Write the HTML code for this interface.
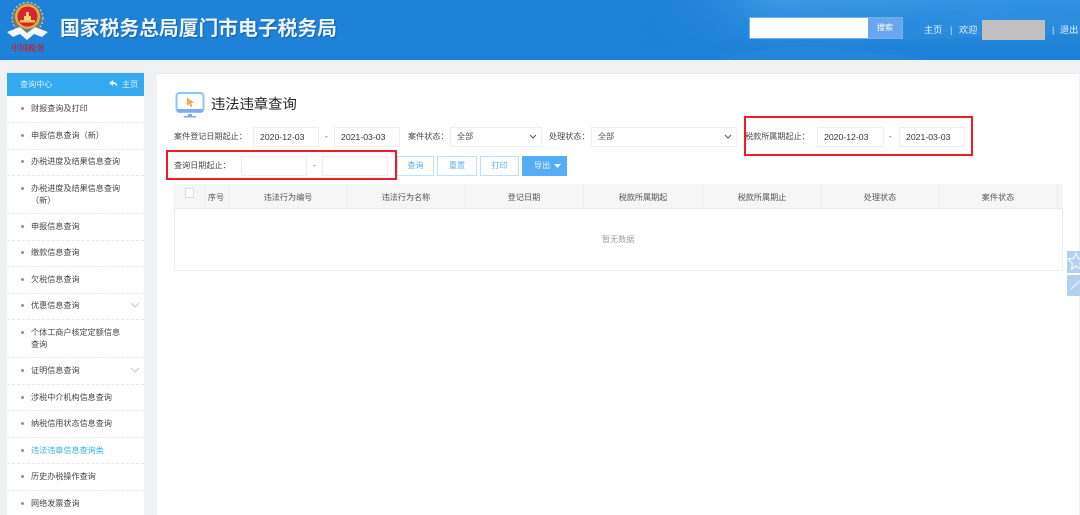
<!DOCTYPE html>
<html lang="zh-CN">
<head>
<meta charset="utf-8">
<title>违法违章查询</title>
<style>
html,body{margin:0;padding:0;width:1080px;height:515px;overflow:hidden;background:#f0f1f3}
body{font-family:"Liberation Sans","Noto Sans CJK SC",sans-serif;font-size:8.1px;color:#484848}
#w{position:relative;width:1080px;height:515px;overflow:hidden;filter:blur(.3px)}
.a{position:absolute;box-sizing:border-box}
.p{font-family:"Noto Sans CJK TC",sans-serif}
.t{position:absolute;white-space:nowrap;line-height:14px;height:14px}
.i{position:absolute;box-sizing:border-box;background:#fff;border:1px solid #eeeeee;height:20px;top:127px;line-height:18px;font-size:8.7px;color:#333;padding-left:6px;white-space:nowrap}
.s{position:absolute;box-sizing:border-box;background:#fff;border:1px solid #eeeeee;height:20px;top:127px;line-height:18px;color:#555;padding-left:6px}
.s svg{position:absolute;right:4px;top:6px}
.b{position:absolute;box-sizing:border-box;top:156px;height:20px;border:1px solid #bfe0f9;background:#fff;color:#5db0ee;text-align:center;line-height:18px}
.d{position:absolute;left:7px;width:137px;height:0;border-top:1px dashed #e8e8e8}
.m{position:absolute;left:31px;white-space:nowrap;line-height:12px;color:#454545}
.dot{position:absolute;left:21px;width:3px;height:3px;border-radius:50%;background:#8a98a4}
.h{position:absolute;top:191px;line-height:14px;white-space:nowrap;color:#555;transform:translateX(-50%)}
.v{position:absolute;top:184px;height:24px;width:1px;background:#ececec}
</style>
</head>
<body>
<div id="w">
<!-- header -->
<div class="a" style="left:0;top:0;width:1080px;height:60px;background:#1e82d8;overflow:hidden">
<svg width="1080" height="60" style="position:absolute;left:0;top:0">
<defs>
<radialGradient id="g" gradientUnits="userSpaceOnUse" cx="880" cy="8" r="240" gradientTransform="translate(0 6) scale(1 .25)"><stop offset="0" stop-color="#3d98e3"/><stop offset=".7" stop-color="#3592e1" stop-opacity=".8"/><stop offset="1" stop-color="#1e82d8" stop-opacity="0"/></radialGradient>
<linearGradient id="k" x1="0" y1="0" x2="1" y2="0"><stop offset="0" stop-color="#1e82d8" stop-opacity="0"/><stop offset=".3" stop-color="#3c97e3"/><stop offset="1" stop-color="#3391e1"/></linearGradient>
<linearGradient id="f" x1="0" y1="0" x2="0" y2="1"><stop offset="0" stop-color="#fff"/><stop offset="1" stop-color="#000"/></linearGradient>
<mask id="mk"><rect x="640" y="0" width="440" height="50" fill="url(#f)"/></mask>
</defs>
<rect x="640" y="0" width="440" height="50" fill="url(#k)" mask="url(#mk)"/>
<path d="M900 28 L943 24 L943 12 L965 11 L966 22 L1000 18 L1080 14 L1080 34 L960 38 L900 40Z" fill="#2f8ddd" opacity=".5"/>
<path d="M720 60 C760 48 800 44 830 48 C860 52 900 54 930 60Z" fill="#2a8ade" opacity=".5"/>
</svg>
<!-- emblem -->
<svg width="56" height="56" style="position:absolute;left:0;top:0" viewBox="0 0 56 56">
<circle cx="27.5" cy="18" r="15.5" fill="#6f7b7e"/>
<circle cx="27.5" cy="18" r="15.5" fill="none" stroke="#c9cdc6" stroke-width="1.2" stroke-dasharray="2 2"/>
<circle cx="27.5" cy="16.5" r="12.5" fill="#d9b04a"/>
<circle cx="27.5" cy="16.5" r="10" fill="#d8242a"/>
<path d="M20 20h15v2.5H20z" fill="#efc860"/>
<path d="M24 16h7v4h-7zM26 12h3v4h-3z" fill="#f3d576"/>
<path d="M7 32 L20 27 L27 33 L35 27 L48 32 L42 37 L34 34 L27 40 L20 34 L13 37Z" fill="#f4f6f4"/>
</svg>
<div class="t" style="left:11px;top:42px;font-size:8.4px;font-family:'Noto Serif CJK SC',serif;font-weight:700;color:#c8212b;line-height:12px;height:12px">中国税务</div>
<div class="t" style="left:60px;top:17px;font-size:19.8px;font-weight:700;color:#eef6fd;line-height:24px;height:24px;text-shadow:1px 1px 1px rgba(20,70,120,.55)">国家税务总局厦门市电子税务局</div>
<div class="a" style="left:749px;top:17px;width:154px;height:22px;border:1px solid #6fb2ec"></div>
<div class="a" style="left:750px;top:18px;width:118px;height:20px;background:#fff"></div>
<div class="a" style="left:868px;top:18px;width:34px;height:20px;background:#6aa5ee;color:#fff;text-align:center;line-height:20px">搜索</div>
<div class="t" style="left:924px;top:23px;font-size:9.2px;color:#e8f3fc">主页</div>
<div class="t" style="left:950px;top:23px;font-size:9.2px;color:#cfe6f9">|</div>
<div class="t" style="left:959px;top:23px;font-size:9.2px;color:#e8f3fc">欢迎</div>
<div class="a" style="left:982px;top:20px;width:63px;height:20px;background:#c0c0c0"></div>
<div class="t" style="left:1052px;top:23px;font-size:9.2px;color:#cfe6f9">|</div>
<div class="t" style="left:1060px;top:23px;font-size:9.2px;color:#e8f3fc">退出</div>
</div>

<!-- sidebar -->
<div class="a" style="left:7px;top:72px;width:137px;height:443px;background:#fff;border-top:1px solid #e6e8ea"></div>
<div class="a" style="left:7px;top:73px;width:137px;height:23px;background:#35a9f0"></div>
<div class="t" style="left:20px;top:78px;color:#d9f0fd">查询中心</div>
<svg class="a" style="left:109px;top:80px" width="9" height="8" viewBox="0 0 9 8"><path d="M4 0 L0 3 L4 6 V4.2 C6 4 7.4 5 8.4 7 C8.4 4 6.6 2 4 1.8Z" fill="#eaf7ff"/></svg>
<div class="t" style="left:122px;top:78px;color:#d9f0fd">主页</div>

<div class="dot" style="top:107px"></div><div class="m" style="top:103px">财报查询及打印</div><div class="d" style="top:122px"></div>
<div class="dot" style="top:134px"></div><div class="m" style="top:130px">申报信息查询<span class="p">（</span>新<span class="p">）</span></div><div class="d" style="top:149px"></div>
<div class="dot" style="top:160px"></div><div class="m" style="top:156px">办税进度及结果信息查询</div><div class="d" style="top:175px"></div>
<div class="dot" style="top:187px"></div><div class="m" style="top:183px">办税进度及结果信息查询<br><span class="p">（</span>新<span class="p">）</span></div><div class="d" style="top:213px"></div>
<div class="dot" style="top:225px"></div><div class="m" style="top:221px">申报信息查询</div><div class="d" style="top:240px"></div>
<div class="dot" style="top:251px"></div><div class="m" style="top:247px">缴款信息查询</div><div class="d" style="top:266px"></div>
<div class="dot" style="top:278px"></div><div class="m" style="top:274px">欠税信息查询</div><div class="d" style="top:293px"></div>
<div class="dot" style="top:304px"></div><div class="m" style="top:300px">优惠信息查询</div><div class="d" style="top:319px"></div>
<div class="dot" style="top:331px"></div><div class="m" style="top:327px">个体工商户核定定额信息<br>查询</div><div class="d" style="top:357px"></div>
<div class="dot" style="top:369px"></div><div class="m" style="top:365px">证明信息查询</div><div class="d" style="top:384px"></div>
<div class="dot" style="top:396px"></div><div class="m" style="top:392px">涉税中介机构信息查询</div><div class="d" style="top:410px"></div>
<div class="dot" style="top:422px"></div><div class="m" style="top:418px">纳税信用状态信息查询</div><div class="d" style="top:437px"></div>
<div class="dot" style="top:449px"></div><div class="m" style="top:445px;color:#35b4e6">违法违章信息查询类</div><div class="d" style="top:463px"></div>
<div class="dot" style="top:475px"></div><div class="m" style="top:471px">历史办税操作查询</div><div class="d" style="top:490px"></div>
<div class="dot" style="top:502px"></div><div class="m" style="top:498px">网络发票查询</div>
<svg class="a" style="left:130px;top:302px" width="10" height="6"><path d="M1 1 L5 5 L9 1" fill="none" stroke="#c4c8cc" stroke-width="1"/></svg>
<svg class="a" style="left:130px;top:367px" width="10" height="6"><path d="M1 1 L5 5 L9 1" fill="none" stroke="#c4c8cc" stroke-width="1"/></svg>

<!-- content -->
<div class="a" style="left:157px;top:73px;width:922px;height:442px;background:#fff;border-top:1px solid #e8e9eb"></div>
<svg class="a" style="left:175px;top:91px" width="30" height="28" viewBox="0 0 30 28">
<rect x="1.5" y="2" width="27" height="19" rx="3" fill="#fff" stroke="#8cc4f7" stroke-width="2"/>
<path d="M2 18h26v1a2 2 0 0 1-2 2H4a2 2 0 0 1-2-2z" fill="#7fa9f2"/>
<path d="M13 23h4v2h-4zM9 25h12v1.5H9z" fill="#7ea8f0"/>
<path d="M12 6.5 L19 11.5 L16 12.2 L17.5 15.5 L15.6 16.2 L14.4 13 L12 15Z" fill="#f7a94b"/>
</svg>
<div class="t" style="left:211px;top:95px;font-size:14.3px;color:#222;line-height:20px;height:20px">违法违章查询</div>

<!-- row 1 -->
<div class="t" style="left:174px;top:130px">案件登记日期起止<span class="p">：</span></div>
<div class="i" style="left:253px;width:66px">2020-12-03</div>
<div class="t" style="left:325px;top:130px">-</div>
<div class="i" style="left:334px;width:66px">2021-03-03</div>
<div class="t" style="left:408px;top:130px">案件状态<span class="p">：</span></div>
<div class="s" style="left:450px;width:92px">全部<svg width="8" height="6"><path d="M1 1 L4 4 L7 1" fill="none" stroke="#555" stroke-width="1"/></svg></div>
<div class="t" style="left:549px;top:130px">处理状态<span class="p">：</span></div>
<div class="s" style="left:591px;width:146px">全部<svg width="8" height="6"><path d="M1 1 L4 4 L7 1" fill="none" stroke="#555" stroke-width="1"/></svg></div>
<div class="t" style="left:745px;top:130px">税款所属期起止<span class="p">：</span></div>
<div class="i" style="left:817px;width:67px">2020-12-03</div>
<div class="t" style="left:889px;top:130px">-</div>
<div class="i" style="left:899px;width:66px">2021-03-03</div>

<!-- row 2 -->
<div class="t" style="left:174px;top:159px">查询日期起止<span class="p">：</span></div>
<div class="i" style="left:241px;top:156px;width:66px"></div>
<div class="t" style="left:313px;top:159px">-</div>
<div class="i" style="left:322px;top:156px;width:66px"></div>
<div class="b" style="left:397px;width:37px">查询</div>
<div class="b" style="left:437px;width:40px">重置</div>
<div class="b" style="left:480px;width:39px">打印</div>
<div class="b" style="left:522px;width:45px;background:#55aef5;border-color:#55aef5;color:#e8f5fe;text-align:left;padding-left:11px">导出</div>
<svg class="a" style="left:554px;top:164px" width="7" height="5"><path d="M0 0 H7 L3.5 4Z" fill="#fff"/></svg>

<!-- red boxes -->
<div class="a" style="left:166px;top:150px;width:231px;height:30px;border:2.5px solid #ed1c24"></div>
<div class="a" style="left:744px;top:116px;width:229px;height:40px;border:2.5px solid #ed1c24"></div>

<!-- table -->
<div class="a" style="left:174px;top:184px;width:889px;height:87px;background:#fff;border:1px solid #eeeeee"></div>
<div class="a" style="left:174px;top:184px;width:889px;height:25px;background:#f6f6f6;border-bottom:1px solid #ececec"></div>
<div class="v" style="left:204px"></div>
<div class="v" style="left:228px"></div>
<div class="v" style="left:347px"></div>
<div class="v" style="left:465px"></div>
<div class="v" style="left:583px"></div>
<div class="v" style="left:702px"></div>
<div class="v" style="left:821px"></div>
<div class="v" style="left:939px"></div>
<div class="v" style="left:1057px"></div>
<div class="a" style="left:185px;top:188px;width:9px;height:10px;background:#fff;border:1px solid #dddddd"></div>
<div class="h" style="left:216px">序号</div>
<div class="h" style="left:288px">违法行为编号</div>
<div class="h" style="left:406px">违法行为名称</div>
<div class="h" style="left:524px">登记日期</div>
<div class="h" style="left:643px">税款所属期起</div>
<div class="h" style="left:762px">税款所属期止</div>
<div class="h" style="left:880px">处理状态</div>
<div class="h" style="left:998px">案件状态</div>
<div class="t" style="left:602px;top:233px;color:#a0a0a0">暂无数据</div>

<!-- floating side buttons -->
<div class="a" style="left:1067px;top:251px;width:13px;height:22px;background:#b3d0ef;overflow:hidden">
<svg width="13" height="22"><path d="M9 2 L11.5 7.5 L17 8 L13 12 L14 18 L9 15 L4.5 18 L5.5 12.5 L1 8 L6.5 7.5Z" fill="none" stroke="#eaf3fc" stroke-width="1.4"/></svg>
</div>
<div class="a" style="left:1067px;top:275px;width:13px;height:21px;background:#b3d0ef;overflow:hidden">
<svg width="13" height="21"><path d="M4 14 L13 6" fill="none" stroke="#eaf3fc" stroke-width="1.2"/></svg>
</div>
</div>
</body>
</html>
